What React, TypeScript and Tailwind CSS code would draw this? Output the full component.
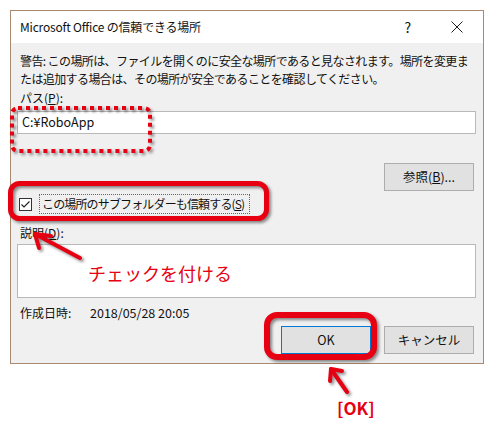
import React from "react";

const jp = { fontFamily: '"Noto Sans CJK JP", "Noto Sans", sans-serif' };

const Btn = ({ label, primary }: { label: React.ReactNode; primary?: boolean }) => (
  <div
    className={`w-[90px] h-[28px] flex items-center justify-center bg-[#e1e1e1] text-[12.5px] text-[#111] border ${
      primary ? "border-[#0078d7]" : "border-[#adadad]"
    }`}
  >
    {label}
  </div>
);

// red call-outs drawn on top of the dialog
const Annotations = () => (
  <>
    <svg
      width="488"
      height="421"
      className="absolute left-0 top-0 pointer-events-none"
      style={{ filter: "drop-shadow(2px 2px 1.5px rgba(0,0,0,0.45))" }}
    >
      <rect x="12" y="108" width="138" height="43" rx="6" fill="none" stroke="#e60012" strokeWidth="4" strokeDasharray="4 4" />
      <rect x="10.5" y="183.5" width="256" height="35" rx="9" fill="none" stroke="#e60012" strokeWidth="5" />
      <rect x="267" y="315" width="107" height="42" rx="10" fill="none" stroke="#e60012" strokeWidth="6" />
      <g stroke="#e60012" strokeWidth="4" fill="none" strokeLinecap="round" strokeLinejoin="round">
        <path d="M35 234 L80 258" />
        <path d="M51 236 L35 234 L39 248" />
        <path d="M331 369 L347 392" />
        <path d="M330 381 L331 369 L342 371" />
      </g>
    </svg>
    <div className="absolute left-[88px] top-[261px] text-[18px] leading-[24px] text-[#e60012]" style={jp}>
      チェックを付ける
    </div>
    <div className="absolute left-[337px] top-[397px] text-[17px] leading-[22px] font-bold text-[#e60012]" style={jp}>
      [OK]
    </div>
  </>
);

export default function App() {
  return (
    <div className="relative w-[488px] h-[421px] bg-white overflow-hidden text-[#111]" style={jp}>
      <div className="pt-[10px] pl-[10px]">
        <div className="w-[474px] h-[354px] border border-[#a88a72] flex flex-col bg-[#f0f0f0]">
          <div className="h-[32px] bg-white flex items-center pl-[9px] pr-[20px] text-[12px] tracking-[-0.2px]">
            <span className="flex-1">Microsoft Office の信頼できる場所</span>
            <span className="mr-[40px] text-[14px]">?</span>
            <svg width="12" height="12" viewBox="0 0 12 12">
              <path d="M0.5 0.5 L11.5 11.5 M11.5 0.5 L0.5 11.5" stroke="#222" strokeWidth="1" />
            </svg>
          </div>
          <div className="flex-1 flex flex-col pl-[6px] pr-[7px] pt-[9px] text-[12px]">
            <p className="pl-[3px] leading-[18px] tracking-[-0.6px] whitespace-nowrap">
              警告: この場所は、ファイルを開くのに安全な場所であると見なされます。場所を変更ま
              <br />
              たは追加する場合は、その場所が安全であることを確認してください。
            </p>
            <div className="pl-[3px] mt-[1px] leading-[18px]">
              パス(<span className="underline">P</span>):
            </div>
            <div className="mt-[4px] h-[23px] bg-white border border-[#b9b9b9] flex items-center pl-[4px] text-[12.5px]">
              C:¥RoboApp
            </div>
            <div className="flex justify-end mt-[29px] mr-[2px]">
              <Btn label={<span>参照(<span className="underline">B</span>)...</span>} />
            </div>
            <div className="flex items-center mt-[3px] pl-[2px] h-[20px]">
              <div className="w-[13px] h-[13px] border border-[#333] bg-white flex items-center justify-center">
                <svg width="11" height="11" viewBox="0 0 11 11">
                  <path d="M1.5 5.5 L4 8 L9.5 2.5" stroke="#222" strokeWidth="1.2" fill="none" />
                </svg>
              </div>
              <div className="ml-[7px] h-[20px] w-[211px] border border-dotted border-[#666] flex items-center pl-[2px] whitespace-nowrap tracking-[-0.85px]">
                この場所のサブフォルダーも信頼する(<span className="underline">S</span>)
              </div>
            </div>
            <div className="pl-[3px] mt-[10px] leading-[18px]">
              説明(<span className="underline">D</span>):
            </div>
            <div className="mt-[2px] h-[54px] bg-white border border-[#b9b9b9]" />
            <div className="pl-[3px] mt-[6px] leading-[18px] flex">
              <span className="w-[70px]">作成日時:</span>
              <span className="text-[12.5px]">2018/05/28 20:05</span>
            </div>
            <div className="flex justify-end gap-[13px] mt-[4px] mr-[2px]">
              <Btn label="OK" primary />
              <Btn label="キャンセル" />
            </div>
          </div>
        </div>
      </div>
      <Annotations />
    </div>
  );
}
